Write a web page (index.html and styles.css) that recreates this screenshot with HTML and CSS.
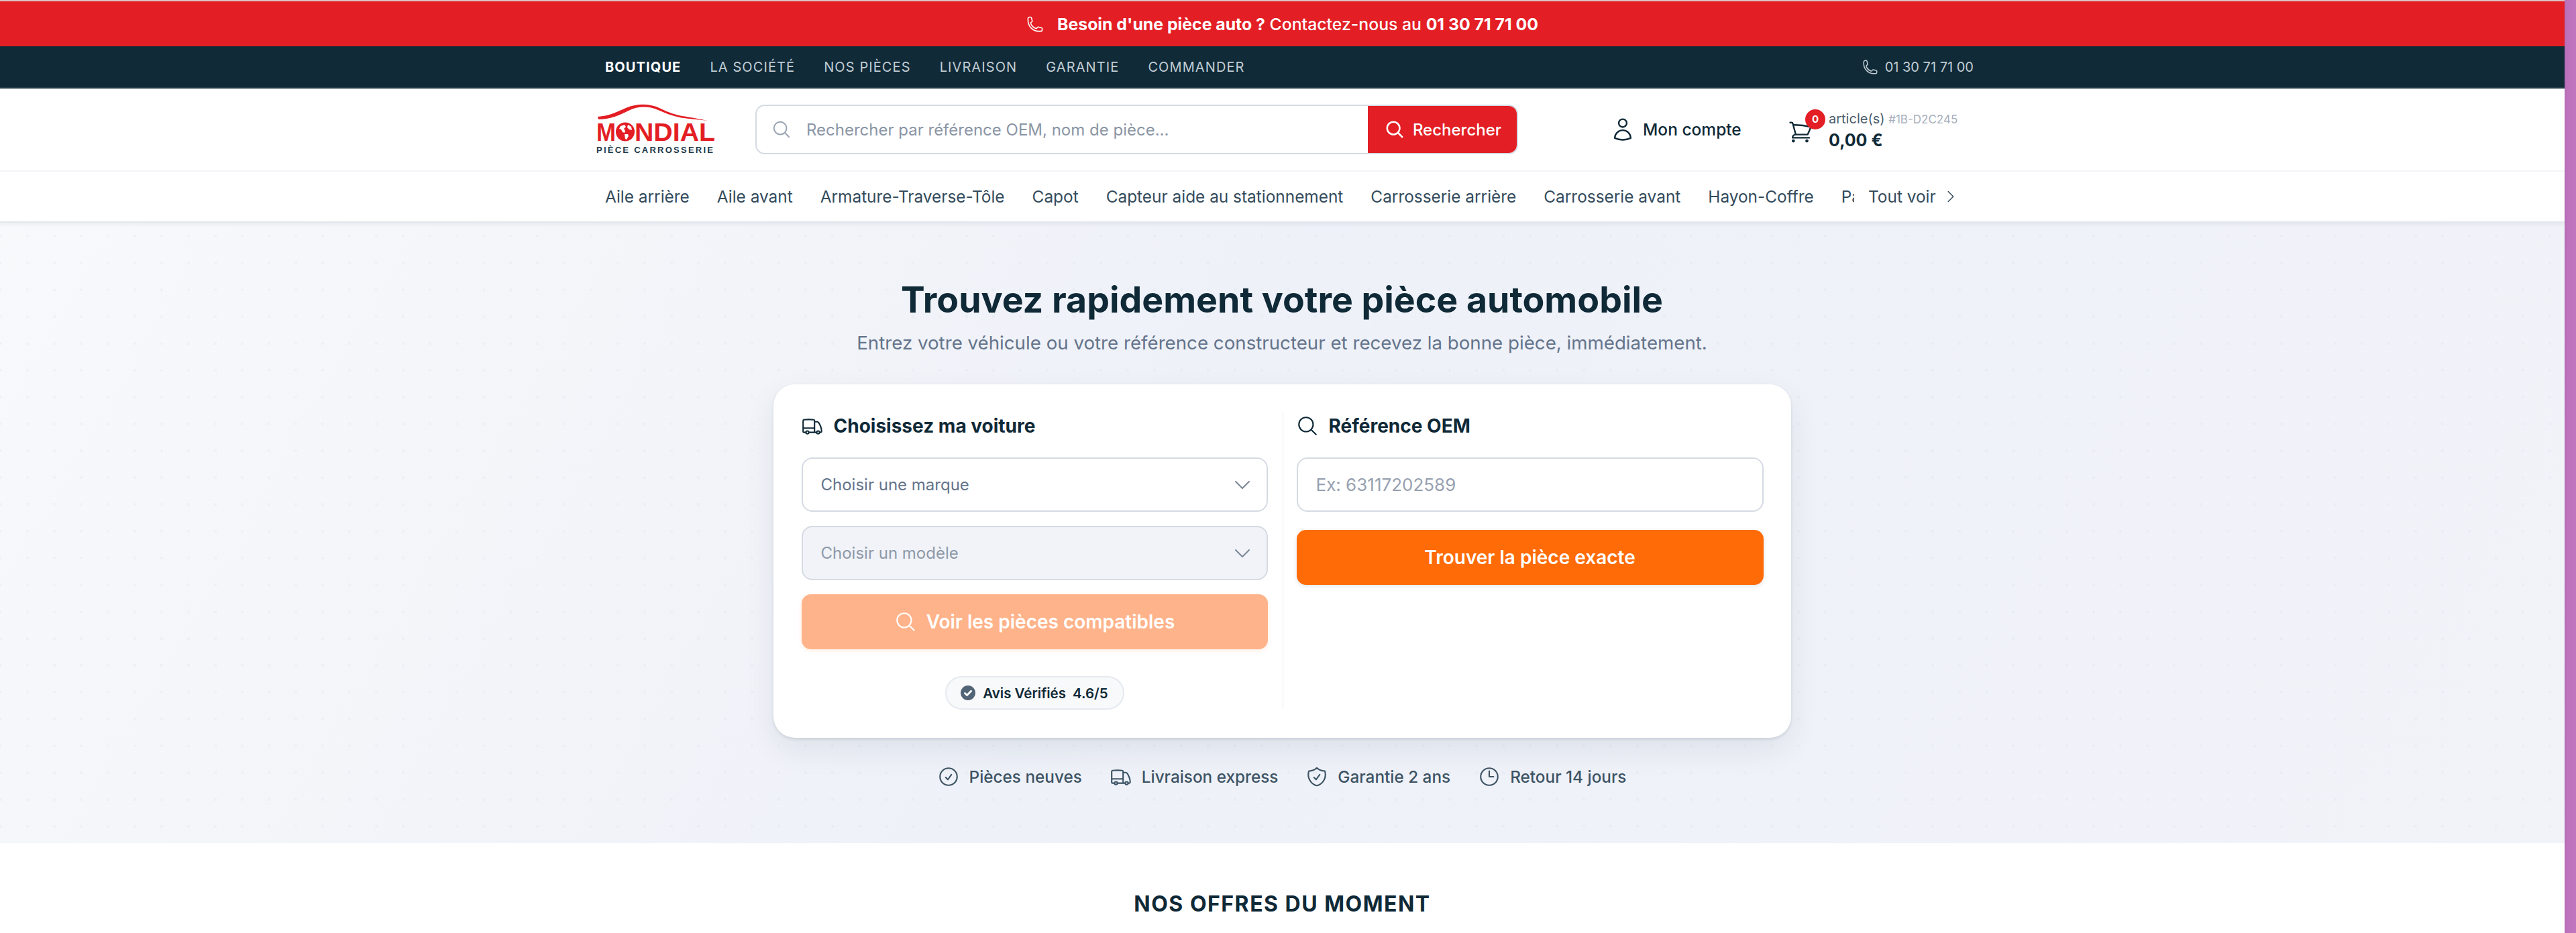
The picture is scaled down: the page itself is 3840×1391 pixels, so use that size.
FILE: index.html
```html
<!DOCTYPE html>
<html lang="fr">
<head>
    <meta charset="UTF-8">
    <title>Mondial Pièce Carrosserie</title>
    <link rel="stylesheet" href="styles.css">
</head>
<body>
    <svg class="sprite" xmlns="http://www.w3.org/2000/svg">
        <symbol id="i-phone" viewBox="0 0 24 24"><path d="M2.25 6.75c0 8.284 6.716 15 15 15h2.25a2.25 2.25 0 002.25-2.25v-1.372c0-.516-.351-.966-.852-1.091l-4.423-1.106c-.44-.11-.902.055-1.173.417l-.97 1.293c-.282.376-.769.542-1.21.38a12.035 12.035 0 01-7.143-7.143c-.162-.441.004-.928.38-1.21l1.293-.97c.363-.271.527-.734.417-1.173L6.963 3.102a1.125 1.125 0 00-1.091-.852H4.5A2.25 2.25 0 002.25 4.5v2.25z"/></symbol>
        <symbol id="i-search" viewBox="0 0 24 24"><path d="M21 21l-5.197-5.197m0 0A7.5 7.5 0 105.196 5.196a7.5 7.5 0 0010.607 10.607z"/></symbol>
        <symbol id="i-user" viewBox="0 0 24 24"><path d="M15.75 6a3.75 3.75 0 11-7.5 0 3.75 3.75 0 017.5 0zM4.501 20.118a7.5 7.5 0 0114.998 0A17.933 17.933 0 0112 21.75c-2.676 0-5.216-.584-7.499-1.632z"/></symbol>
        <symbol id="i-cart" viewBox="0 0 24 24"><path d="M2.25 3h1.386c.51 0 .955.343 1.087.835l.383 1.437M7.5 14.25a3 3 0 00-3 3h15.75m-12.75-3h11.218c1.121-2.3 2.1-4.684 2.924-7.138a60.114 60.114 0 00-16.536-1.84M7.5 14.25L5.106 5.272M6 20.25a.75.75 0 11-1.5 0 .75.75 0 011.5 0zm12.75 0a.75.75 0 11-1.5 0 .75.75 0 011.5 0z"/></symbol>
        <symbol id="i-truck" viewBox="0 0 24 24"><path d="M8.25 18.75a1.5 1.5 0 01-3 0m3 0a1.5 1.5 0 00-3 0m3 0h6m-9 0H3.375a1.125 1.125 0 01-1.125-1.125V14.25m17.25 4.5a1.5 1.5 0 01-3 0m3 0a1.5 1.5 0 00-3 0m3 0h1.125c.621 0 1.129-.504 1.09-1.124a17.902 17.902 0 00-3.213-9.193 2.056 2.056 0 00-1.58-.86H14.25M16.5 18.75h-2.25m0-11.177v-.958c0-.568-.422-1.048-.987-1.106a48.554 48.554 0 00-10.026 0 1.106 1.106 0 00-.987 1.106v7.635m12-6.677v6.677m0 4.5v-4.5m0 0h-12"/></symbol>
        <symbol id="i-check" viewBox="0 0 24 24"><path d="M9 12.75L11.25 15 15 9.75M21 12a9 9 0 11-18 0 9 9 0 0118 0z"/></symbol>
        <symbol id="i-shield" viewBox="0 0 24 24"><path d="M9 12.75L11.25 15 15 9.75m-3-7.036A11.959 11.959 0 013.598 6 11.99 11.99 0 003 9.749c0 5.592 3.824 10.29 9 11.623 5.176-1.332 9-6.03 9-11.622 0-1.31-.21-2.571-.598-3.751h-.152c-3.196 0-6.1-1.248-8.25-3.286z"/></symbol>
        <symbol id="i-clock" viewBox="0 0 24 24"><path d="M12 6v6h4.5m4.5 0a9 9 0 11-18 0 9 9 0 0118 0z"/></symbol>
        <symbol id="i-down" viewBox="0 0 24 24"><path d="M19.5 8.25l-7.5 7.5-7.5-7.5"/></symbol>
        <symbol id="i-right" viewBox="0 0 24 24"><path d="M8.25 4.5l7.5 7.5-7.5 7.5"/></symbol>
    </svg>

    <div class="page">
        <div class="site">
            <div class="promo">
                <svg class="icon icon-promo"><use href="#i-phone"/></svg>
                <span><strong>Besoin d'une pièce auto ?</strong> Contactez-nous au <strong>01 30 71 71 00</strong></span>
            </div>

            <div class="topbar">
                <nav class="topbar-links">
                    <a class="active" href="#">Boutique</a>
                    <a href="#">La société</a>
                    <a href="#">Nos pièces</a>
                    <a href="#">Livraison</a>
                    <a href="#">Garantie</a>
                    <a href="#">Commander</a>
                </nav>
                <div class="topbar-phone">
                    <svg class="icon icon-small"><use href="#i-phone"/></svg>
                    <span>01 30 71 71 00</span>
                </div>
            </div>

            <header class="header">
                <a class="logo" href="#">
                    <svg viewBox="0 0 178 78" width="178" height="78">
                        <path class="logo-car" d="M2 20 C20 19 32 12 44 7 C58 1 78 -1 96 8 C108 14 118 17 128 19 C142 21 156 24 166 26 C150 24 136 23 124 21 C110 18 102 14 92 10 C78 4 62 4 48 11 C34 18 20 24 3 24 Z"/>
                        <text class="logo-name" x="0" y="56" textLength="29" lengthAdjust="spacingAndGlyphs">M</text>
                        <circle class="logo-globe" cx="43" cy="42.5" r="14"/>
                        <path class="logo-land" d="M36 34 l6 -2 l2 3 l-3 3 l2 3 l-1 3 l-3 -1 l-2 -4 l-3 -1 Z M42 46 l5 0 l1 3 l-3 5 l-2 -1 Z M47 32 l5 3 l1 5 l-4 -1 l-3 -3 Z"/>
                        <text class="logo-name" x="57" y="56" textLength="120" lengthAdjust="spacingAndGlyphs">NDIAL</text>
                        <text class="logo-sub" x="0" y="74" textLength="174">PIÈCE CARROSSERIE</text>
                    </svg>
                </a>

                <form class="search">
                    <svg class="icon icon-search-field"><use href="#i-search"/></svg>
                    <input type="text" placeholder="Rechercher par référence OEM, nom de pièce...">
                    <button type="button">
                        <svg class="icon icon-button"><use href="#i-search"/></svg>
                        Rechercher
                    </button>
                </form>

                <a class="account" href="#">
                    <svg class="icon icon-account"><use href="#i-user"/></svg>
                    <span>Mon compte</span>
                </a>

                <a class="cart" href="#">
                    <div class="cart-icon">
                        <svg class="icon icon-cart"><use href="#i-cart"/></svg>
                        <span class="cart-badge">0</span>
                    </div>
                    <div class="cart-text">
                        <div class="cart-line">article(s) <small>#1B-D2C245</small></div>
                        <strong>0,00 €</strong>
                    </div>
                </a>
            </header>

            <nav class="categories">
                <div class="categories-list">
                    <a href="#">Aile arrière</a>
                    <a href="#">Aile avant</a>
                    <a href="#">Armature-Traverse-Tôle</a>
                    <a href="#">Capot</a>
                    <a href="#">Capteur aide au stationnement</a>
                    <a href="#">Carrosserie arrière</a>
                    <a href="#">Carrosserie avant</a>
                    <a href="#">Hayon-Coffre</a>
                    <a href="#">Pare-chocs</a>
                </div>
                <a class="see-all" href="#">Tout voir <svg class="icon icon-more"><use href="#i-right"/></svg></a>
            </nav>

            <section class="hero">
                <h1>Trouvez rapidement votre pièce automobile</h1>
                <p class="lead">Entrez votre véhicule ou votre référence constructeur et recevez la bonne pièce, immédiatement.</p>

                <div class="finder">
                    <div class="finder-col finder-left">
                        <h2><svg class="icon icon-title"><use href="#i-truck"/></svg>Choisissez ma voiture</h2>
                        <div class="field">
                            <span>Choisir une marque</span>
                            <svg class="icon icon-chevron"><use href="#i-down"/></svg>
                        </div>
                        <div class="field field-disabled">
                            <span>Choisir un modèle</span>
                            <svg class="icon icon-chevron"><use href="#i-down"/></svg>
                        </div>
                        <button class="btn btn-light" type="button">
                            <svg class="icon icon-btn-large"><use href="#i-search"/></svg>
                            Voir les pièces compatibles
                        </button>
                        <div class="rating">
                            <svg class="rating-icon" viewBox="0 0 24 24">
                                <circle cx="12" cy="12" r="12"/>
                                <path d="M7 12.5l3.4 3.4L17 9"/>
                            </svg>
                            <span>Avis Vérifiés</span>
                            <span>4.6/5</span>
                        </div>
                    </div>

                    <div class="finder-col finder-right">
                        <h2><svg class="icon icon-title"><use href="#i-search"/></svg>Référence OEM</h2>
                        <input class="field field-input" type="text" placeholder="Ex: 63117202589">
                        <button class="btn btn-exact" type="button">Trouver la pièce exacte</button>
                    </div>
                </div>

                <ul class="trust">
                    <li><svg class="icon icon-trust"><use href="#i-check"/></svg>Pièces neuves</li>
                    <li><svg class="icon icon-trust"><use href="#i-truck"/></svg>Livraison express</li>
                    <li><svg class="icon icon-trust"><use href="#i-shield"/></svg>Garantie 2 ans</li>
                    <li><svg class="icon icon-trust"><use href="#i-clock"/></svg>Retour 14 jours</li>
                </ul>
            </section>

            <section class="offers">
                <h3>Nos offres du moment</h3>
            </section>
        </div>

        <div class="side-strip"></div>
    </div>
</body>
</html>
```

FILE: styles.css
```css
* {
    box-sizing: border-box;
}
html, body {
    margin: 0;
    height: 100%;
    overflow: hidden;
}
body {
    font-family: Inter, "Noto Sans", sans-serif;
    color: #0f2937;
    background-color: #ffffff;
}
a {
    color: inherit;
    text-decoration: none;
}
.sprite {
    display: none;
}
.icon {
    fill: none;
    stroke: currentColor;
    stroke-width: 1.5;
    stroke-linecap: round;
    stroke-linejoin: round;
    flex: none;
}
.page {
    display: flex;
    height: 1391px;
}
.site {
    flex: 1;
    min-width: 0;
}
.side-strip {
    width: 17px;
    background: linear-gradient(90deg, #b56cb6 0, #bd72bc 4px, #c075bd 100%);
}

/* bandeaux du haut */
.promo {
    height: 69px;
    border-top: 2px solid #ddc4c6;
    background-color: #e31e24;
    color: #ffffff;
    display: flex;
    align-items: center;
    justify-content: center;
    gap: 20px;
    font-size: 24.8px;
    font-weight: 500;
}
.promo strong {
    font-weight: 700;
}
.icon-promo {
    width: 26px;
    height: 26px;
}
.topbar {
    height: 63px;
    border-bottom: 2px solid #233c4a;
    background-color: #102a38;
    color: #c2cdd4;
    display: flex;
    align-items: center;
    justify-content: space-between;
    padding: 0 881px 0 902px;
    font-size: 20px;
}
.topbar-links {
    display: flex;
    gap: 43px;
}
.topbar-links a {
    text-transform: uppercase;
    letter-spacing: 1.1px;
}
.topbar-links .active {
    color: #ffffff;
    font-weight: 700;
}
.topbar-phone {
    display: flex;
    align-items: center;
    gap: 10px;
}
.icon-small {
    width: 24px;
    height: 24px;
}

/* entete */
.header {
    height: 122px;
    display: flex;
    align-items: center;
    padding-left: 889px;
}
.logo {
    display: block;
    width: 178px;
    height: 78px;
    margin-right: 59px;
}
.logo-car {
    fill: #e31e24;
}
.logo-name {
    font-family: "Liberation Sans", sans-serif;
    font-weight: 700;
    font-size: 37px;
    fill: #e31e24;
}
.logo-globe {
    fill: #e31e24;
}
.logo-land {
    fill: #ffffff;
}
.logo-sub {
    font-family: "Liberation Sans", sans-serif;
    font-weight: 700;
    font-size: 13px;
    fill: #1d3a4a;
}
.search {
    width: 1137px;
    height: 74px;
    display: flex;
    align-items: center;
    border: 2px solid #d5dae3;
    border-radius: 14px;
    padding-left: 22px;
    margin-right: 143px;
    overflow: hidden;
}
.icon-search-field {
    width: 30px;
    height: 30px;
    color: #97a1b0;
    margin-right: 22px;
}
.search input {
    flex: 1;
    min-width: 0;
    border: none;
    outline: none;
    padding: 0;
    font: inherit;
    font-size: 24px;
}
.search input::placeholder {
    color: #8a95a5;
    opacity: 1;
}
.search button {
    width: 224px;
    height: 74px;
    margin-right: -2px;
    border: none;
    background-color: #e31e24;
    color: #ffffff;
    font: inherit;
    font-size: 24px;
    font-weight: 500;
    display: flex;
    align-items: center;
    justify-content: center;
    gap: 12px;
}
.icon-button {
    width: 30px;
    height: 30px;
    stroke-width: 2;
}
.account {
    display: flex;
    align-items: center;
    gap: 17px;
    width: 262px;
    font-size: 24.5px;
    font-weight: 500;
}
.icon-account {
    width: 38px;
    height: 38px;
    margin: 0 -6px;
}
.cart {
    display: flex;
    align-items: center;
    gap: 12px;
}
.cart-icon {
    position: relative;
    width: 46px;
    height: 40px;
}
.icon-cart {
    width: 38px;
    height: 38px;
    margin: 5px 0 0 -3px;
}
.cart-badge {
    position: absolute;
    top: -10px;
    right: -7px;
    width: 30px;
    height: 30px;
    border-radius: 50%;
    background-color: #e31e24;
    color: #ffffff;
    font-size: 15px;
    font-weight: 700;
    text-align: center;
    line-height: 30px;
}
.cart-line {
    font-size: 20px;
    color: #4b5d6d;
    line-height: 30px;
}
.cart-line small {
    font-size: 17px;
    color: #a5aeba;
}
.cart-text strong {
    display: block;
    font-size: 25px;
    font-weight: 700;
    line-height: 32px;
}

/* categories */
.categories {
    height: 78px;
    border-top: 2px solid #f3f4f8;
    border-bottom: 2px solid #e4e7eb;
    box-shadow: 0 3px 5px rgba(15, 41, 55, 0.06);
    display: flex;
    align-items: center;
    padding-left: 902px;
    font-size: 24.4px;
    color: #334b5c;
    position: relative;
}
.categories-list {
    width: 1862px;
    display: flex;
    gap: 41px;
    overflow: hidden;
    white-space: nowrap;
}
.see-all {
    display: flex;
    align-items: center;
    gap: 10px;
    margin-left: 21px;
}
.icon-more {
    width: 24px;
    height: 24px;
}

/* hero */
.hero {
    height: 925px;
    padding: 83px 1px 0 0;
    text-align: center;
    background-color: #f1f3f9;
    background-image:
        radial-gradient(circle, rgba(120, 135, 160, 0.05) 2px, transparent 2.5px),
        linear-gradient(120deg, #f8f9fb 0%, #eef1f8 45%, #f1f3f9 100%);
    background-size: 40px 40px, 100% 100%;
    background-position: -19px 0, 0 0;
}
.hero h1 {
    margin: 0;
    font-size: 53.6px;
    line-height: 64px;
    font-weight: 700;
}
.lead {
    margin: 12px 0 42px;
    font-size: 27.7px;
    line-height: 40px;
    color: #64748b;
}
.finder {
    width: 1517px;
    height: 527px;
    margin: 0 auto;
    padding: 41px 41px 43px 42px;
    background-color: #ffffff;
    border-radius: 32px;
    box-shadow: 0 2px 4px rgba(15, 41, 55, 0.12), 0 18px 46px rgba(15, 41, 55, 0.08);
    display: grid;
    grid-template-columns: 718px 716px;
    text-align: left;
}
.finder-left {
    padding-right: 22px;
    border-right: 1px solid #e6e9ee;
}
.finder-right {
    padding-left: 20px;
}
.finder h2 {
    margin: 0 0 26px;
    height: 42px;
    display: flex;
    align-items: center;
    gap: 15px;
    font-size: 28px;
    font-weight: 700;
}
.icon-title {
    width: 34px;
    height: 34px;
    margin-left: -1px;
}
.field {
    width: 100%;
    height: 81px;
    margin-bottom: 21px;
    padding: 0 20px 0 27px;
    display: flex;
    align-items: center;
    justify-content: space-between;
    border: 2px solid #d5dae3;
    border-radius: 16px;
    background-color: #ffffff;
    font-family: inherit;
    font-size: 24px;
    color: #64748b;
}
.field-disabled {
    background-color: #f1f3f8;
    color: #8e99a8;
}
.field-input {
    outline: none;
    margin-bottom: 27px;
    font-size: 26px;
}
.field-input::placeholder {
    color: #97a1b0;
    opacity: 1;
}
.icon-chevron {
    width: 32px;
    height: 32px;
    color: #7b8796;
}
.btn {
    width: 100%;
    height: 82px;
    border: none;
    border-radius: 14px;
    color: #ffffff;
    font-family: inherit;
    font-size: 28px;
    font-weight: 600;
    display: flex;
    align-items: center;
    justify-content: center;
    gap: 14px;
}
.btn-light {
    background-color: #ffb38a;
    box-shadow: 0 2px 6px rgba(255, 107, 6, 0.12);
}
.btn-exact {
    background-color: #ff6b06;
    box-shadow: 0 2px 6px rgba(15, 41, 55, 0.12);
}
.icon-btn-large {
    width: 34px;
    height: 34px;
}
.rating {
    width: 267px;
    height: 50px;
    margin: 40px auto 0;
    display: flex;
    align-items: center;
    justify-content: center;
    gap: 10px;
    border: 2px solid #e6e9ef;
    border-radius: 25px;
    background-color: #f8f9fb;
    font-size: 20.5px;
    font-weight: 600;
}
.rating-icon {
    width: 22px;
    height: 22px;
    margin-right: 1px;
}
.rating-icon circle {
    fill: #526577;
}
.rating-icon path {
    fill: none;
    stroke: #ffffff;
    stroke-width: 3;
    stroke-linecap: round;
    stroke-linejoin: round;
}
.trust {
    list-style: none;
    margin: 40px 0 0;
    padding: 0;
    display: flex;
    justify-content: center;
    gap: 42px;
    font-size: 24.3px;
    font-weight: 500;
    line-height: 36px;
    color: #3d5364;
}
.trust li {
    display: flex;
    align-items: center;
    gap: 15px;
}
.icon-trust {
    width: 34px;
    height: 34px;
    margin: 0 -1px;
}

/* offres */
.offers {
    padding-top: 70px;
    text-align: center;
}
.offers h3 {
    margin: 0;
    font-size: 32px;
    line-height: 42px;
    font-weight: 700;
    text-transform: uppercase;
    letter-spacing: 1.5px;
}
```
